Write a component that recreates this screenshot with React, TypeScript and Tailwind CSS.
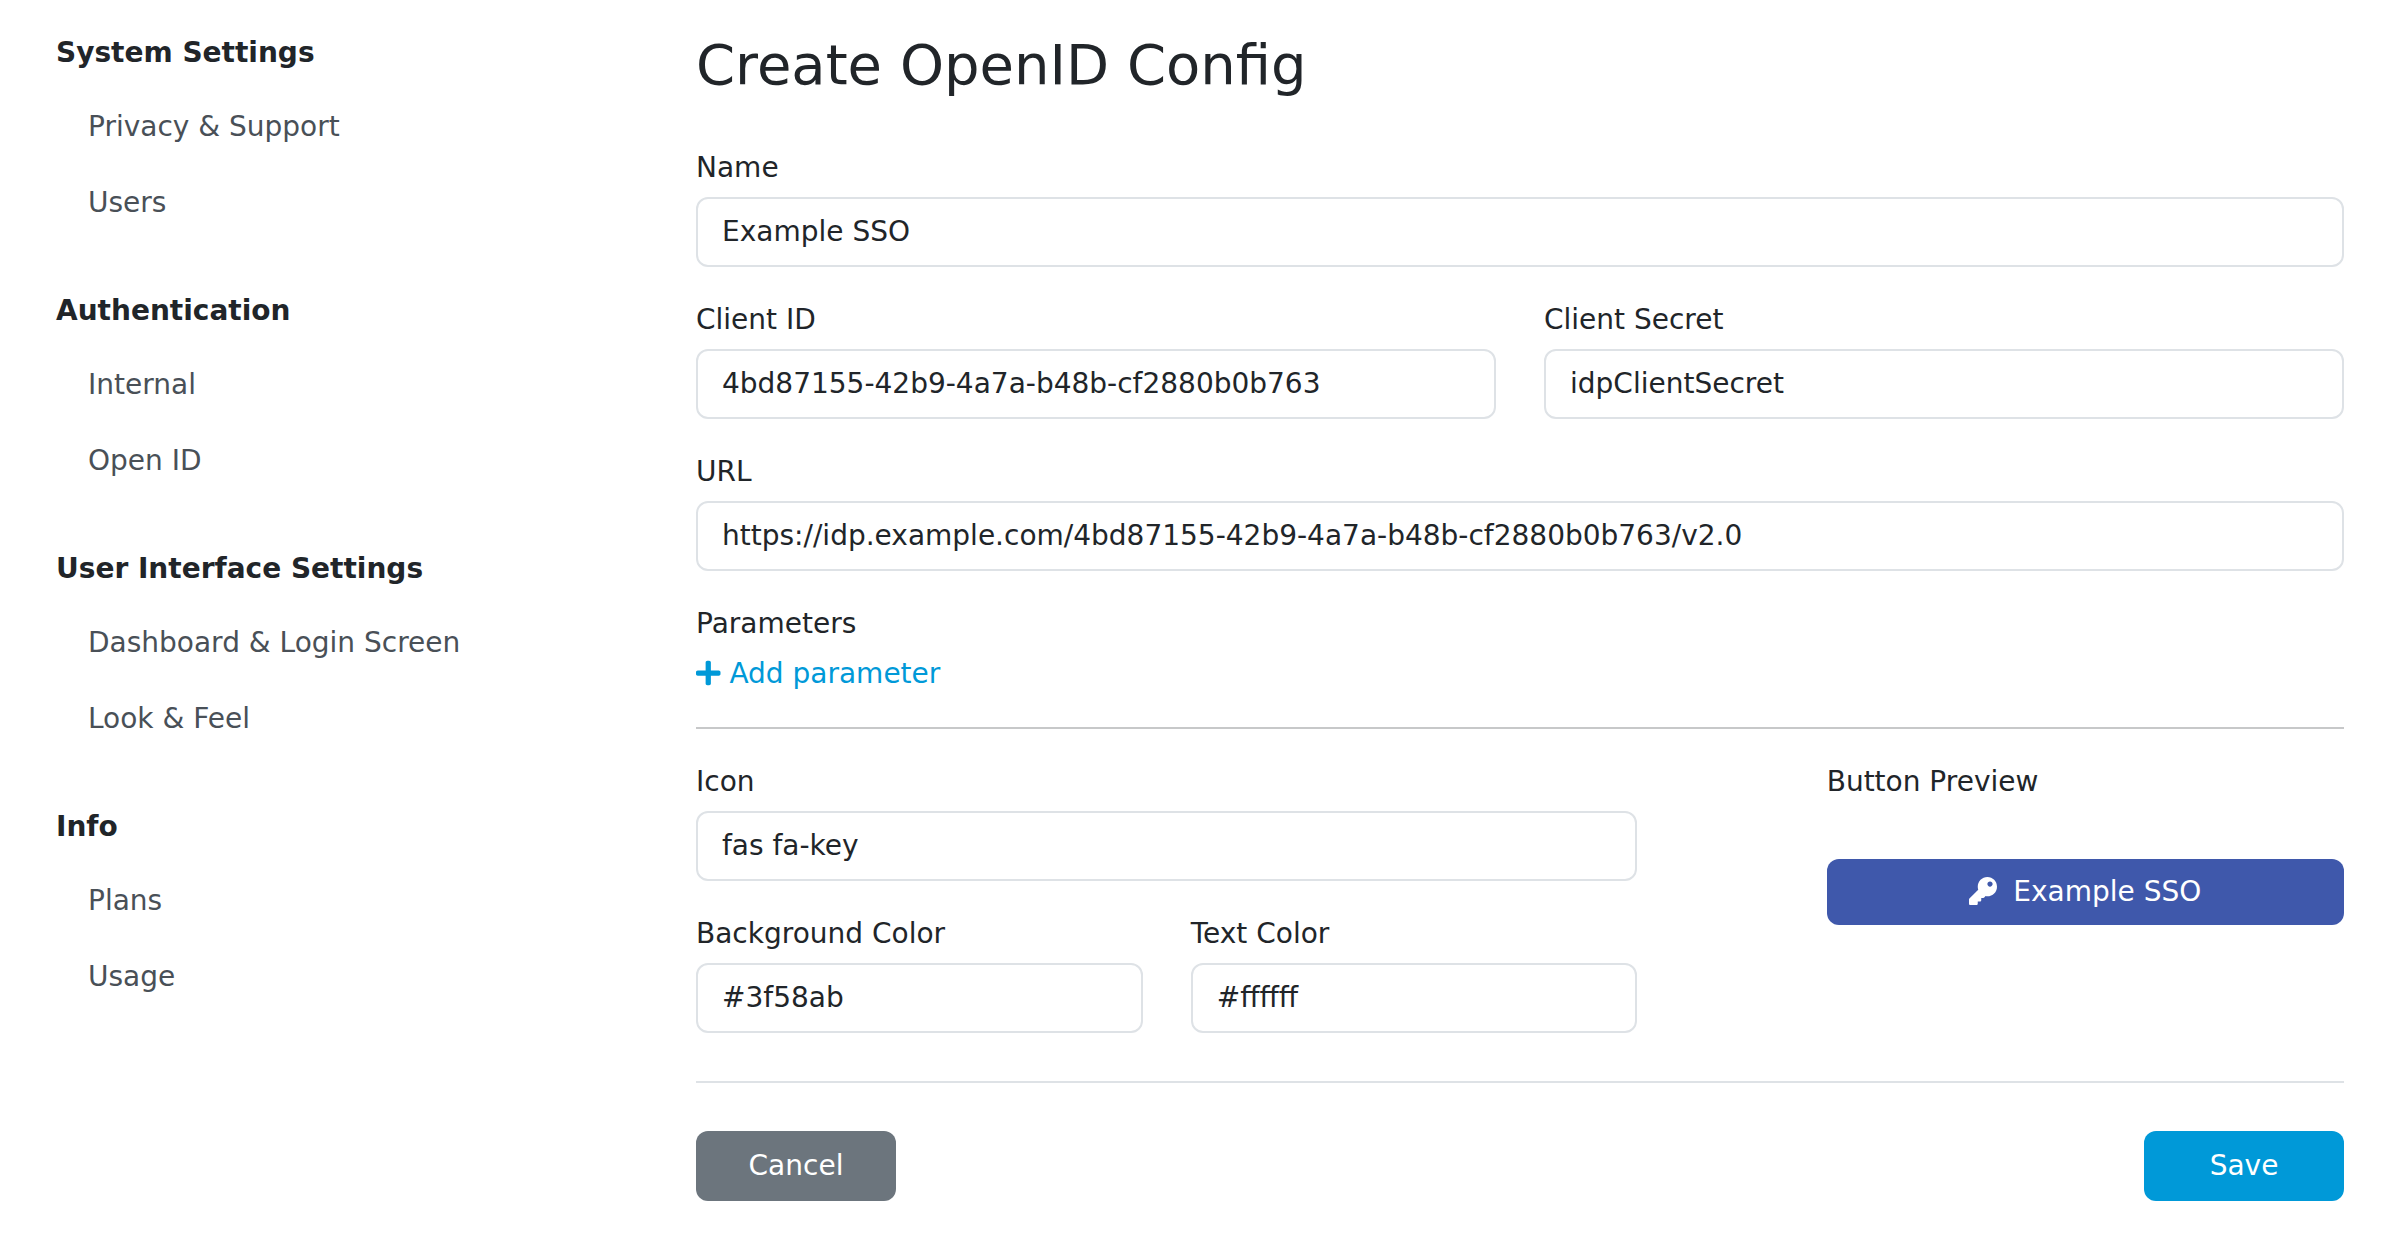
import React from "react";
import { FaKey, FaPlus } from "react-icons/fa";

const sections = [
  { title: "System Settings", items: ["Privacy & Support", "Users"] },
  { title: "Authentication", items: ["Internal", "Open ID"] },
  { title: "User Interface Settings", items: ["Dashboard & Login Screen", "Look & Feel"] },
  { title: "Info", items: ["Plans", "Usage"] },
];

function Field({ label, value }: { label: string; value: string }) {
  return (
    <label className="block min-w-0 flex-1">
      <span className="mb-2 block">{label}</span>
      <input
        type="text"
        defaultValue={value}
        className="block h-[70px] w-full rounded-xl border-2 border-[#dee2e6] bg-white px-6 pt-[11px] pb-[13px] text-[#212529] outline-none"
      />
    </label>
  );
}

function Sidebar() {
  return (
    <nav className="w-[640px] shrink-0">
      {sections.map((section) => (
        <div key={section.title} className="mb-[49px]">
          <h2 className="mb-[15px] font-bold">{section.title}</h2>
          <ul>
            {section.items.map((item) => (
              <li key={item}>
                <a href="#" className="block px-8 py-[17px] text-[#495057]">{item}</a>
              </li>
            ))}
          </ul>
        </div>
      ))}
    </nav>
  );
}

export default function App() {
  return (
    <div className="flex h-[1240px] w-[2400px] overflow-hidden bg-white px-14 font-['DejaVu_Sans',sans-serif] text-[28px] leading-[42px] text-[#212529]">
      <div className="pt-8">
        <Sidebar />
      </div>
      <main className="min-w-0 flex-1 pt-[31px]">
        <h1 className="mb-[49px] text-[56px] leading-[67px]">Create OpenID Config</h1>
        <div className="flex flex-col gap-8">
          <Field label="Name" value="Example SSO" />
          <div className="flex gap-12">
            <Field label="Client ID" value="4bd87155-42b9-4a7a-b48b-cf2880b0b763" />
            <Field label="Client Secret" value="idpClientSecret" />
          </div>
          <Field label="URL" value="https://idp.example.com/4bd87155-42b9-4a7a-b48b-cf2880b0b763/v2.0" />
          <div>
            <div className="mb-2">Parameters</div>
            <a href="#" className="flex items-center gap-[8.9px] text-[#0099d8]">
              <FaPlus className="mb-[2px] h-7 w-[24.5px]" />
              Add parameter
            </a>
          </div>
        </div>
        <hr className="my-8 border-t-2 border-[#212529]/25" />
        <div className="flex justify-between">
          <div className="flex w-[941.33px] flex-col gap-8">
            <Field label="Icon" value="fas fa-key" />
            <div className="flex gap-12">
              <Field label="Background Color" value="#3f58ab" />
              <Field label="Text Color" value="#ffffff" />
            </div>
          </div>
          <div className="w-[517.33px]">
            <div className="mb-14">Button Preview</div>
            <button className="flex h-[66px] w-full items-center justify-center gap-4 rounded-xl bg-[#3f58ab] text-white">
              <FaKey className="mb-[3px] size-7" />
              Example SSO
            </button>
          </div>
        </div>
        <div className="mt-12 flex justify-between border-t-2 border-[#dee2e6] pt-12">
          <button className="h-[70px] w-[200px] rounded-xl bg-[#6c757d] text-white">Cancel</button>
          <button className="h-[70px] w-[200px] rounded-xl bg-[#0099d8] text-white">Save</button>
        </div>
      </main>
    </div>
  );
}
